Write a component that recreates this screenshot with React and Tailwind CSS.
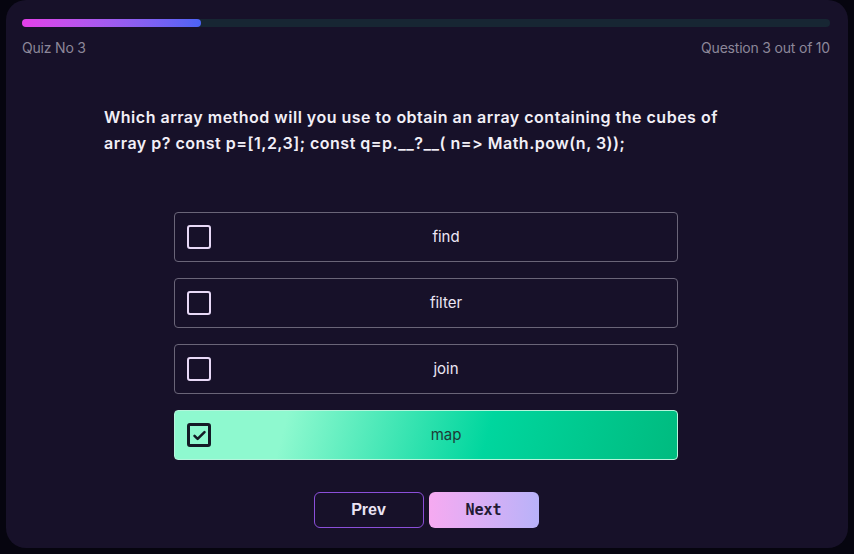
import { useState } from 'react';

const options = ['find', 'filter', 'join', 'map'];

export default function App() {
  const [selected, setSelected] = useState(3);

  return (
    <div className="h-[554px] w-full bg-[#06050f] px-[6px] pb-[6px] [font-feature-settings:'calt'_0,'liga'_0]" style={{ fontFamily: 'Inter, "Open Sans", sans-serif' }}>
      <div className="flex h-full flex-col rounded-[20px] bg-[#171129] pl-4 pr-[18px] pt-[19px]">
        {/* progress */}
        <div className="h-2 rounded-full bg-[#172633]">
          <div className="h-2 w-[179px] rounded-full bg-gradient-to-r from-[#e33ee9] to-[#4b63f5]"></div>
        </div>
        <div className="mt-[10px] flex justify-between text-[14px] tracking-[-0.2px] text-[#8c8799]">
          <span>Quiz No 3</span>
          <span>Question 3 out of 10</span>
        </div>

        <p className="ml-[82px] mt-[46px] w-[625px] text-[16px] font-semibold leading-[26px] tracking-[0.5px] text-[#f2eff7]">
          Which array method will you use to obtain an array containing the cubes of array p? const p=[1,2,3]; const q=p.__?__( n=&gt; Math.pow(n, 3));
        </p>

        <div className="mt-[56px] flex flex-col items-center gap-4">
          {options.map((opt, i) => {
            const on = selected === i;
            return (
              <button
                key={opt}
                onClick={() => setSelected(i)}
                className={
                  on
                    ? 'flex h-[50px] w-[504px] items-center rounded-[4px] border border-[#b6f5dc] bg-[linear-gradient(105deg,#8ef9cf_22%,#00d69e_62%,#00bb7f_100%)] pl-3 text-[#1e3a35]'
                    : 'flex h-[50px] w-[504px] items-center rounded-[4px] border border-[#6a6578] pl-3 text-[#ece6f4]'
                }
              >
                <span
                  className={
                    on
                      ? 'flex h-6 w-6 items-center justify-center rounded-[3px] border-[3px] border-[#141a26]'
                      : 'h-6 w-6 rounded-[3px] border-2 border-[#e8d9f7]'
                  }
                >
                  {on && (
                    <svg width="15" height="15" viewBox="0 0 24 24" fill="none" stroke="#141a26" strokeWidth="4" strokeLinecap="round" strokeLinejoin="round">
                      <path d="M4 12.5l5 5L20 6.5" />
                    </svg>
                  )}
                </span>
                <span className="ml-1 flex-1 text-center text-[15px]">{opt}</span>
              </button>
            );
          })}
        </div>

        <div className="mt-8 flex justify-center gap-[5px]">
          <button className="h-9 w-[110px] rounded-[6px] border border-[#8b4fd9] text-[16px] font-bold text-[#ebe3f3]" style={{ fontFamily: '"Liberation Sans", sans-serif' }}>
            Prev
          </button>
          <button className="h-9 w-[110px] rounded-[6px] bg-gradient-to-r from-[#f6aaf1] to-[#b8b2f9] text-[15px] font-bold text-[#231a33]" style={{ fontFamily: '"DejaVu Sans Mono", monospace' }}>
            Next
          </button>
        </div>
      </div>
    </div>
  );
}
